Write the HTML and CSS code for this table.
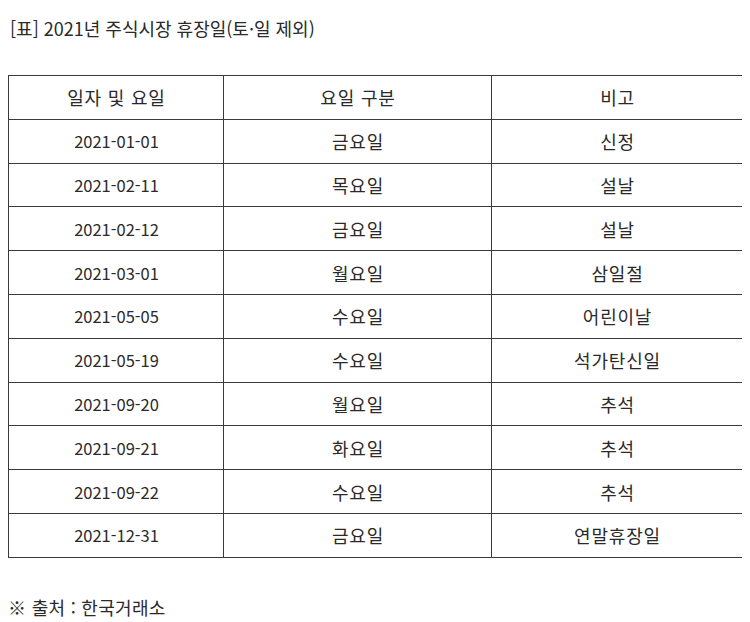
FILE: index.html
```html
<!DOCTYPE html>
<html lang="ko">
<head>
<meta charset="utf-8">
<link rel="stylesheet" href="styles.css">
</head>
<body>
<p class="title">[표] 2021년 주식시장 휴장일(토·일 제외)</p>
<table class="holidays">
  <colgroup>
    <col class="c1"><col class="c2"><col class="c3">
  </colgroup>
  <thead>
    <tr><th>일자 및 요일</th><th>요일 구분</th><th>비고</th></tr>
  </thead>
  <tbody>
    <tr><td class="date">2021-01-01</td><td>금요일</td><td>신정</td></tr>
    <tr><td class="date">2021-02-11</td><td>목요일</td><td>설날</td></tr>
    <tr><td class="date">2021-02-12</td><td>금요일</td><td>설날</td></tr>
    <tr><td class="date">2021-03-01</td><td>월요일</td><td>삼일절</td></tr>
    <tr><td class="date">2021-05-05</td><td>수요일</td><td>어린이날</td></tr>
    <tr><td class="date">2021-05-19</td><td>수요일</td><td>석가탄신일</td></tr>
    <tr><td class="date">2021-09-20</td><td>월요일</td><td>추석</td></tr>
    <tr><td class="date">2021-09-21</td><td>화요일</td><td>추석</td></tr>
    <tr><td class="date">2021-09-22</td><td>수요일</td><td>추석</td></tr>
    <tr><td class="date">2021-12-31</td><td>금요일</td><td>연말휴장일</td></tr>
  </tbody>
</table>
<p class="source">※ 출처 : 한국거래소</p>
</body>
</html>
```
FILE: styles.css
```css
html, body {
  background: #fff;
}
body {
  margin: 8px;
  font-family: "Noto Sans CJK KR", "Noto Sans", sans-serif;
  font-size: 16px;
  color: #2a2a2a;
}
.title {
  margin: 8px 0 0 2px;
  line-height: 24px;
  font-size: 18px;
}
.holidays {
  margin-top: 35px;
  width: 734px;
  border-collapse: collapse;
  table-layout: fixed;
}
.c1 { width: 215px; }
.c2 { width: 268px; }
.c3 { width: 251px; }
.holidays th,
.holidays td {
  border: 1px solid #3a3a3a;
  height: 42.8px;
  padding: 0 0 0 1px;
  text-align: center;
  vertical-align: middle;
  font-weight: 400;
  font-size: 18px;
  letter-spacing: 0.8px;
  line-height: 22px;
}
.holidays td.date {
  font-size: 16.5px;
  letter-spacing: 0;
}
.source {
  margin: 39px 0 0 0;
  line-height: 20px;
  font-size: 18px;
  letter-spacing: 0.3px;
}
```
